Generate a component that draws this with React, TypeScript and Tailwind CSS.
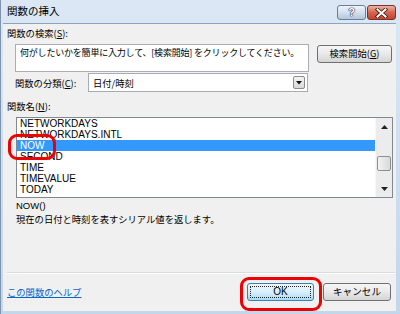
const jp = "font-['Meiryo_UI','Noto_Sans_CJK_JP',sans-serif]";
const latin = "font-['Liberation_Sans','Noto_Sans_CJK_JP',sans-serif]";

const functions = [
  "NETWORKDAYS",
  "NETWORKDAYS.INTL",
  "NOW",
  "SECOND",
  "TIME",
  "TIMEVALUE",
  "TODAY",
];

function Button({
  children,
  className = "",
  primary = false,
}: {
  children: React.ReactNode;
  className?: string;
  primary?: boolean;
}) {
  return (
    <div
      className={`flex items-center justify-center rounded-[3px] border p-[2px] ${
        primary
          ? "border-[#3c7fb1] bg-linear-to-b from-[#eaf6fd] via-[#d9f0fc] to-[#a7d9f5]"
          : "border-[#707070] bg-linear-to-b from-[#f6f6f6] via-[#e9e9e9] to-[#d4d4d4]"
      } ${className}`}
    >
      <div
        className={`flex h-full w-full items-center justify-center ${
          primary ? "border border-dotted border-[#222]" : ""
        }`}
      >
        {children}
      </div>
    </div>
  );
}

export default function App() {
  return (
    <div
      className={`relative flex h-[314px] w-[400px] flex-col overflow-hidden border-l border-[#7f93ad] bg-linear-to-b from-[#dbe7f4] to-[#c2d6ec] text-black ${jp}`}
    >
      {/* title bar */}
      <div className="flex h-[23px] shrink-0 items-start justify-between">
        <span className="pl-[6px] pt-[4px] text-[10.5px] leading-[14px] text-black">
          関数の挿入
        </span>
        <div className="flex gap-[1px] pr-[4px] pt-[5px]">
          <div className="flex h-[15px] w-[29px] items-center justify-center rounded-[3px] border border-[#6d7f96] bg-linear-to-b from-[#eef4fb] via-[#d3e0ef] to-[#b3c6dd]">
            <span className="font-['Liberation_Sans',sans-serif] text-[11px] font-bold leading-none text-white [text-shadow:0_0_1px_#1c2a3c,0_0_1px_#1c2a3c,0_0_1px_#1c2a3c]">
              ?
            </span>
          </div>
          <div className="flex h-[15px] w-[29px] items-center justify-center rounded-[3px] border border-[#7a3328] bg-linear-to-b from-[#eab0a3] via-[#d56550] to-[#c2452e]">
            <svg width="13" height="10" viewBox="0 0 13 10">
              <path d="M2.5 1.5 L10.5 8.5 M10.5 1.5 L2.5 8.5" stroke="#3a1812" strokeWidth="3.6" strokeLinecap="square" />
              <path d="M2.5 1.5 L10.5 8.5 M10.5 1.5 L2.5 8.5" stroke="#ffffff" strokeWidth="2" strokeLinecap="square" />
            </svg>
          </div>
        </div>
      </div>

      {/* client area */}
      <div className="ml-[2px] mr-[4px] mb-[3px] flex flex-1 flex-col border-t border-[#8ea3bd] bg-[#f0f0f0] text-[9.3px]">
        <div className="mt-[1px] h-[16px] pl-[4px] leading-[16px]">
          関数の検索(<span className="underline">S</span>):
        </div>

        <div className="mt-[3px] flex items-start gap-[8px] pl-[12px]">
          <div className="h-[28px] w-[294px] overflow-hidden whitespace-nowrap border border-[#abadb3] bg-white pl-[4px] pt-[1px] text-[9px] leading-[14px] tracking-[-0.2px]">
            何がしたいかを簡単に入力して、[検索開始] をクリックしてください。
          </div>
          <Button className="mt-[1px] h-[18px] w-[75px]">
            <span className="leading-none">
              検索開始(<span className="underline">G</span>)
            </span>
          </Button>
        </div>

        <div className="mt-[1px] flex h-[19px] items-center pl-[12px]">
          <span className="w-[73px] leading-[16px]">
            関数の分類(<span className="underline">C</span>):
          </span>
          <div className="flex h-[19px] w-[220px] items-center justify-between border border-[#a5acb5] bg-white pl-[4px] pr-[2px]">
            <span className="leading-[14px]">日付/時刻</span>
            <div className="flex h-[13px] w-[12px] items-center justify-center rounded-[2px] border border-[#8b8b8b] bg-linear-to-b from-[#f4f4f4] to-[#d8d8d8]">
              <svg width="6" height="4" viewBox="0 0 6 4">
                <path d="M0 0 H6 L3 3.5 Z" fill="#111" />
              </svg>
            </div>
          </div>
        </div>

        <div className="mt-[6px] h-[16px] pl-[4px] leading-[16px]">
          関数名(<span className="underline">N</span>):
        </div>

        <div className="ml-[13px] mt-[3px] flex h-[81px] w-[377px] border border-[#828790] bg-white">
          <div className={`flex-1 ${latin} text-[10px]`}>
            {functions.map((f) => (
              <div
                key={f}
                className={`h-[11px] pl-[3px] leading-[11px] ${
                  f === "NOW" ? "bg-[#3399ff] text-white" : "text-black"
                }`}
              >
                {f}
              </div>
            ))}
          </div>
          <div className="flex w-[17px] flex-col items-center border-l border-[#f7f7f7] bg-[#ececec]">
            <div className="flex h-[17px] items-center justify-center">
              <svg width="7" height="4" viewBox="0 0 7 4">
                <path d="M0 4 H7 L3.5 0 Z" fill="#222" />
              </svg>
            </div>
            <div className="mt-[21px] h-[15px] w-[14px] rounded-[2px] border border-[#8e8f8f] bg-linear-to-r from-[#f3f3f3] to-[#d9d9d9]" />
            <div className="mt-auto flex h-[17px] items-center justify-center">
              <svg width="7" height="4" viewBox="0 0 7 4">
                <path d="M0 0 H7 L3.5 4 Z" fill="#222" />
              </svg>
            </div>
          </div>
        </div>

        <div className={`ml-[13px] mt-[2px] h-[12px] leading-[12px] ${latin} text-[9.5px]`}>
          NOW()
        </div>
        <div className="ml-[13px] mt-[1px] h-[12px] leading-[12px]">
          現在の日付と時刻を表すシリアル値を返します。
        </div>

        <div className="ml-[4px] mr-[1px] mt-[47px] h-[2px] border-t border-b border-t-[#dcdcdc] border-b-white" />

        <div className="mt-[9px] flex items-center justify-between pl-[4px] pr-[5px]">
          <span className="leading-[14px] text-[#0066cc] underline">
            この関数のヘルプ
          </span>
          <div className="flex gap-[9px]">
            <Button primary className="h-[18px] w-[67px]">
              <span className={`${latin} text-[10px] leading-none`}>OK</span>
            </Button>
            <Button className="h-[18px] w-[68px]">
              <span className="text-[9.6px] leading-none">キャンセル</span>
            </Button>
          </div>
        </div>
      </div>

      {/* red highlight marks */}
      <div className="pointer-events-none absolute left-[7px] top-[134px] h-[26px] w-[48px] rounded-[9px] border-[3px] border-[#ee0000]" />
      <div className="pointer-events-none absolute left-[239px] top-[277px] h-[34px] w-[82px] rounded-[9px] border-[3px] border-[#ee0000]" />
    </div>
  );
}
